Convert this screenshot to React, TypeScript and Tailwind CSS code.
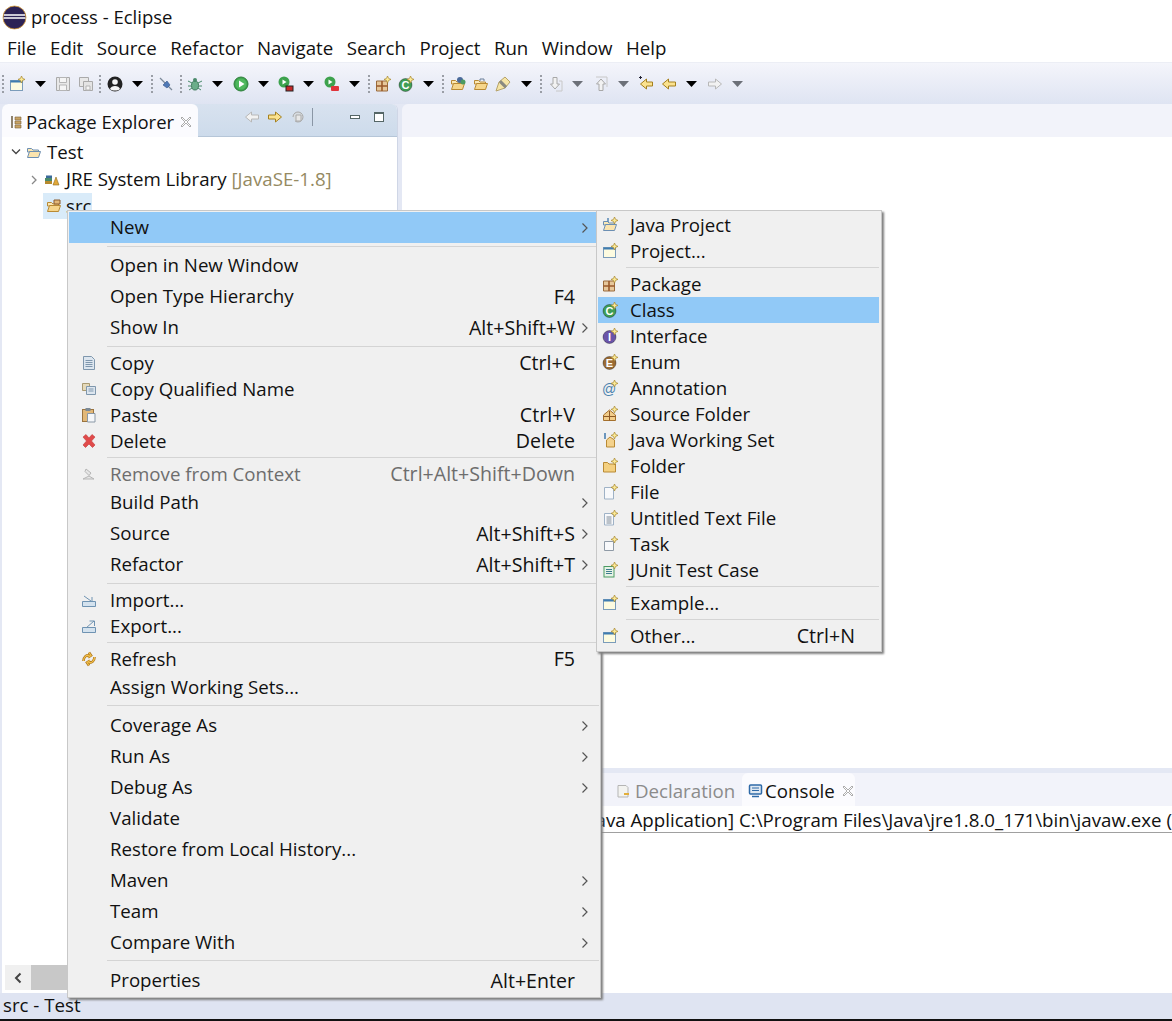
import React from "react";

const S = ({ x = 0, y = 0 }: { x?: number; y?: number }) => (
  <path transform={`translate(${x} ${y})`} d="M12.500 0l1.100 2.400 2.400 1-2.400 1-1.100 2.600-1-2.600-2.500-1 2.500-1z" fill="#fdeb95" stroke="#a8862e" strokeWidth="0.700" />
);

const I = ({ children, size = 16 }: { children: React.ReactNode; size?: number }) => (
  <svg width={size} height={size} viewBox="0 0 16 16" className="shrink-0 block">{children}</svg>
);

const Folder = ({ fill = "#f6d68c", stroke = "#b98a34" }: { fill?: string; stroke?: string }) => (
  <>
    <path d="M1.500 4.500h4l1.500 1.500h5.500v2h-11z" fill="#fbe8b5" stroke={stroke} />
    <path d="M1.500 13.500l2-6h11l-2 6z" fill={fill} stroke={stroke} />
  </>
);

const Win = () => (
  <>
    <rect x="1.500" y="4.500" width="12" height="10" fill="#fdfbe0" stroke="#7b9cba" />
    <rect x="1.500" y="4.500" width="12" height="2" fill="#3f7cb0" />
    <S />
  </>
);

const Pkg = ({ star = true }: { star?: boolean }) => (
  <>
    <path d="M1.500 5h11v10h-11z" fill="#e6c79b" stroke="#9a6b3c" />
    <path d="M7 5v10M1.500 10h11" stroke="#9a5a2c" strokeWidth="1.600" />
    {star && <S />}
  </>
);

const Ball = ({ c, l, star = true }: { c: string; l: string; star?: boolean }) => (
  <>
    <circle cx="7.500" cy="9" r="6.500" fill={c} stroke="#00000055" />
    <text x="7.500" y="12.800" textAnchor="middle" fontSize="11" fontWeight="700" fill="#fff" fontFamily="Liberation Sans">{l}</text>
    {star && <S />}
  </>
);

const Doc = ({ lines = false, c = "#9fb2c6" }: { lines?: boolean; c?: string }) => (
  <>
    <path d="M2.500 3.500h7l2 2v9.500h-9z" fill="#f8f9fb" stroke={c} />
    {lines && <path d="M4.500 7h5M4.500 9h5M4.500 11h5M4.500 13h5" stroke="#7f8b98" />}
    <S />
  </>
);

const icons: Record<string, React.ReactNode> = {
  win: <I><Win /></I>,
  jproj: <I><Folder fill="#fbe4ae" stroke="#6c8fb3" /><path d="M6 1v4" stroke="#4a7fb0" strokeWidth="1.400" /><S /></I>,
  pkg: <I><Pkg /></I>,
  cls: <I><Ball c="#3f9d55" l="C" /></I>,
  ifc: <I><Ball c="#6a54a8" l="I" /></I>,
  enm: <I><Ball c="#9a6a32" l="E" /></I>,
  ann: <I><text x="7" y="13.500" textAnchor="middle" fontSize="14" fill="#4a82ae" fontFamily="Liberation Sans">@</text><S /></I>,
  srcf: <I><path d="M1.500 9l6-5 6 5v5.500h-12z" fill="#f2cd8a" stroke="#a5702c" /><path d="M7.500 5v9.500M1.500 10.500h12" stroke="#8e5a26" /><S /></I>,
  jws: <I><path d="M3 1v6" stroke="#4a7fb0" strokeWidth="1.600" /><path d="M4.500 15V8l3.500-3 4.500 3v7z" fill="#f4d28c" stroke="#b98a34" /><S /></I>,
  fld: <I><path d="M1.500 14V4.500h4l1.500 1.500h6.500V14z" fill="#f4d080" stroke="#b98a34" /><S /></I>,
  file: <I><Doc /></I>,
  txt: <I><Doc lines /></I>,
  task: <I><path d="M2.500 5.500h9v9h-9z" fill="#f8f9fb" stroke="#8f9aa6" /><S /></I>,
  junit: <I><rect x="2" y="4.500" width="10" height="10.500" fill="#e7f3e6" stroke="#4b9b63" /><path d="M4 7.500h6M4 9.500h6M4 11.500h6" stroke="#3e7d8f" /><S /></I>,
  copy: <I><path d="M2.500 1.500h8l3 3v10h-11z" fill="#dde6ef" stroke="#7f97ad" /><path d="M4.500 5.500h7M4.500 7.500h7M4.500 9.500h7M4.500 11.500h7" stroke="#7f97ad" /></I>,
  copyq: <I><path d="M1.500 2.500h7v7h-7z" fill="#e5d9b9" stroke="#a99a72" /><path d="M5.500 5.500h9v8h-9z" fill="#dde6ef" stroke="#7f97ad" /><path d="M7.500 8h5M7.500 10h5" stroke="#7f97ad" /></I>,
  paste: <I><rect x="1.500" y="2.500" width="11" height="12" fill="#e2b878" stroke="#9a7440" /><rect x="4.500" y="1" width="5" height="3" fill="#7c8a96" /><path d="M6.500 6.500h7.500v8.500H6.500z" fill="#f5f7fa" stroke="#8a98a6" /></I>,
  del: <I><path d="M2 4l3-2.500 3 3.500 3-3.500 3 2.500-3.500 4 3.500 4-2.500 2.500-3.500-3.500-3.500 3.500-2.500-2.500 3.500-4z" fill="#e04a4a" stroke="#c23a3a" strokeWidth="0.600" /></I>,
  rm: <I><path d="M2 13l6-3 5 3zM5 3l5 4-2 2.500-4-4z" fill="#e6e6e6" stroke="#b5b5b5" /></I>,
  imp: <I><path d="M1.500 9.500h13v5h-13z" fill="#d4e2ee" stroke="#6f93b2" /><path d="M3 4l7 5M11 5v4.500H6.500" fill="none" stroke="#6f93b2" /></I>,
  exp: <I><path d="M1.500 9.500h13v5h-13z" fill="#d4e2ee" stroke="#6f93b2" /><path d="M5 10l8-7M8.500 3H13.500V8" fill="none" stroke="#6f93b2" /></I>,
  ref: (
    <I>
      <path d="M2.500 10c0-4 3-6.500 6-5.500M8 1.500l2 3-3 2M13.500 6c0 4-3 6.500-6 5.500M8 14.500l-2-3 3-2" fill="none" stroke="#a8701a" strokeWidth="2.600" />
      <path d="M2.500 10c0-4 3-6.500 6-5.500M8 1.500l2 3-3 2M13.500 6c0 4-3 6.500-6 5.500M8 14.500l-2-3 3-2" fill="none" stroke="#f2c04a" strokeWidth="1.300" />
    </I>
  ),
};

type Row = { l?: string; k?: string; i?: string; a?: boolean; h?: string; hi?: boolean; off?: boolean; c?: string };

const dn = "pt-[2px]";
const main: Row[] = [
  { l: "New", a: true, h: "h-[31px]", hi: true },
  {},
  { l: "Open in New Window", h: "h-[31px]" },
  { l: "Open Type Hierarchy", k: "F4", h: "h-[31px]" },
  { l: "Show In", k: "Alt+Shift+W", a: true, h: "h-[31px]" },
  {},
  { l: "Copy", k: "Ctrl+C", i: "copy", h: "h-[26px]" },
  { l: "Copy Qualified Name", i: "copyq", h: "h-[26px]" },
  { l: "Paste", k: "Ctrl+V", i: "paste", h: "h-[26px]" },
  { l: "Delete", k: "Delete", i: "del", h: "h-[26px]" },
  {},
  { l: "Remove from Context", k: "Ctrl+Alt+Shift+Down", i: "rm", h: "h-[26px]", off: true },
  { l: "Build Path", a: true, h: "h-[31px]" },
  { l: "Source", k: "Alt+Shift+S", a: true, h: "h-[31px]" },
  { l: "Refactor", k: "Alt+Shift+T", a: true, h: "h-[31px]" },
  {},
  { l: "Import...", i: "imp", h: "h-[26px]" },
  { l: "Export...", i: "exp", h: "h-[26px]" },
  {},
  { l: "Refresh", k: "F5", i: "ref", h: "h-[26px]" },
  { l: "Assign Working Sets...", h: "h-[30px]" },
  {},
  { l: "Coverage As", a: true, h: "h-[31px]", c: dn },
  { l: "Run As", a: true, h: "h-[31px]", c: dn },
  { l: "Debug As", a: true, h: "h-[31px]", c: dn },
  { l: "Validate", h: "h-[31px]", c: dn },
  { l: "Restore from Local History...", h: "h-[31px]", c: dn },
  { l: "Maven", a: true, h: "h-[31px]", c: dn },
  { l: "Team", a: true, h: "h-[31px]", c: dn },
  { l: "Compare With", a: true, h: "h-[31px]", c: dn },
  {},
  { l: "Properties", k: "Alt+Enter", h: "h-[31px]", c: dn },
];

const sub: Row[] = [
  { l: "Java Project", i: "jproj" },
  { l: "Project...", i: "win" },
  {},
  { l: "Package", i: "pkg" },
  { l: "Class", i: "cls", hi: true },
  { l: "Interface", i: "ifc" },
  { l: "Enum", i: "enm" },
  { l: "Annotation", i: "ann" },
  { l: "Source Folder", i: "srcf" },
  { l: "Java Working Set", i: "jws" },
  { l: "Folder", i: "fld" },
  { l: "File", i: "file" },
  { l: "Untitled Text File", i: "txt" },
  { l: "Task", i: "task" },
  { l: "JUnit Test Case", i: "junit" },
  {},
  { l: "Example...", i: "win" },
  {},
  { l: "Other...", k: "Ctrl+N", i: "win" },
];

const Chevron = () => (
  <svg width="8" height="12" viewBox="0 0 8 12" className="block">
    <path d="M1.500 1.500L6 6l-4.500 4.500" fill="none" stroke="#555" strokeWidth="1.200" />
  </svg>
);

const Main = () => (
  <div className="absolute left-[67px] top-[210px] z-10 w-[534px] h-[788px] bg-[#f0f0f0] border border-[#c8c8c8] p-px shadow-[2px_2px_2px_#808080]">
    {main.map((r, n) =>
      r.l ? (
        <div key={n} className={`flex items-center ${r.h} ${r.c ?? ""} ${r.hi ? "bg-[#91c9f7]" : ""} ${r.off ? "text-[#6d6d6d]" : "text-[#111]"}`}>
          <div className="w-[41px] pl-[12px] shrink-0">{r.i && icons[r.i]}</div>
          <div className="flex-1">{r.l}</div>
          <div className="text-[19.600px]">{r.k}</div>
          <div className="w-[24px] pl-[6px] shrink-0">{r.a && <Chevron />}</div>
        </div>
      ) : (
        <div key={n} className="h-[7px] flex items-center pl-[38px]">
          <div className="h-px w-full bg-[#d4d4d4]" />
        </div>
      )
    )}
  </div>
);

const Sub = () => (
  <div className="absolute left-[596px] top-[210px] z-20 w-[286px] h-[442px] bg-[#f0f0f0] border border-[#c8c8c8] p-px shadow-[2px_2px_2px_#808080]">
    {sub.map((r, n) =>
      r.l ? (
        <div key={n} className={`flex items-center h-[26px] mr-[1px] text-[#111] ${r.hi ? "bg-[#91c9f7]" : ""}`}>
          <div className="w-[32px] pl-[4px] shrink-0">{r.i && icons[r.i]}</div>
          <div className="flex-1">{r.l}</div>
          <div className="text-[19.600px]">{r.k}</div>
          <div className="w-[24px] shrink-0" />
        </div>
      ) : (
        <div key={n} className="h-[7px] flex items-center pl-[28px] pr-px">
          <div className="h-px w-full bg-[#d4d4d4]" />
        </div>
      )
    )}
  </div>
);

const Caret = ({ off }: { off?: boolean }) => (
  <div className="w-[22.800px] shrink-0 flex justify-center">
    <svg width="11" height="6" viewBox="0 0 11 6" className="block">
      <path d="M0 0h11L5.500 6z" fill={off ? "#6c7078" : "#000"} />
    </svg>
  </div>
);
const Grip = () => (
  <div className="w-[6px] shrink-0 h-[18px] flex justify-center">
    <div className="h-full border-l-2 border-dotted border-[#9a9ea6]" />
  </div>
);
const T = ({ children }: { children: React.ReactNode }) => (
  <div className="w-[22.800px] shrink-0 flex justify-center">{children}</div>
);

const Arrow = ({ dir, fill, stroke }: { dir: "l" | "r"; fill: string; stroke: string }) => (
  <I>
    <path d={dir === "l" ? "M1.500 8l6-5v3h7v4h-7v3z" : "M14.500 8l-6-5v3h-7v4h7v3z"} fill={fill} stroke={stroke} />
  </I>
);

const Arrow2 = () => (
  <>
    <path d="M2.500 8l6-5v3h6v4h-6v3z" fill="#fbe28e" stroke="#a5801e" />
    <path d="M1 1.500h3M2.500 0v3" stroke="#223" strokeWidth="1" />
  </>
);

const Toolbar = () => (
  <div className="h-[42px] flex items-center bg-gradient-to-b from-[#f4f5fb] to-[#dfe4f2] border-t border-[#eceef5] shrink-0">
    <Grip />
    <T><I><Win /></I></T>
    <Caret />
    <T><I><path d="M1.500 1.500h13v13h-13z" fill="#e8e8e8" stroke="#aaa" /><path d="M4.500 1.500h7v5h-7zM4.500 9h7v5.500h-7z" fill="#f5f5f5" stroke="#b5b5b5" /></I></T>
    <T><I><path d="M1.500 1.500h9v9h-9z" fill="#e8e8e8" stroke="#aaa" /><path d="M5.500 5.500h9v9h-9z" fill="#e4e4e4" stroke="#aaa" /><path d="M8 10h4v4H8z" fill="#f5f5f5" stroke="#b5b5b5" /></I></T>
    <Grip />
    <T><I><circle cx="8" cy="8" r="7.500" fill="#222" /><circle cx="8" cy="6" r="2.800" fill="#f5f5f5" /><path d="M3 13c1-4 9-4 10 0-2 2-8 2-10 0z" fill="#f5f5f5" /></I></T>
    <Caret />
    <Grip />
    <T><I><path d="M2 2l12 12" stroke="#7c8a9a" strokeWidth="1.200" /><path d="M5 9l4-4 3 4-3 3z" fill="#4f78b5" stroke="#35558c" strokeWidth="0.600" /></I></T>
    <Grip />
    <T><I><ellipse cx="8" cy="9.500" rx="3.500" ry="4.500" fill="#6cae8a" stroke="#3f7a5c" /><circle cx="8" cy="4" r="2" fill="#4a8a6a" /><path d="M1 5l4 2M1 10h3M2 14l3-2M15 5l-4 2M15 10h-3M14 14l-3-2" stroke="#4a8a6a" /></I></T>
    <Caret />
    <T><I><circle cx="8" cy="8" r="7" fill="#3da24d" stroke="#2d7f3a" /><circle cx="8" cy="8" r="5.500" fill="#4fb85e" /><path d="M6 4.500l5.500 3.500L6 11.500z" fill="#fff" /></I></T>
    <Caret />
    <T><I><circle cx="6" cy="6" r="5.500" fill="#3da24d" /><path d="M4.500 3.500l4 2.500-4 2.500z" fill="#fff" /><rect x="8" y="10" width="7" height="5" fill="#c62828" stroke="#222" /></I></T>
    <Caret />
    <T><I><circle cx="6" cy="6" r="5.500" fill="#3da24d" /><path d="M4.500 3.500l4 2.500-4 2.500z" fill="#fff" /><rect x="7" y="10" width="8" height="5" rx="1" fill="#e0333a" /></I></T>
    <Caret />
    <Grip />
    <T><I><Pkg /></I></T>
    <T><I><Ball c="#3f9d55" l="C" /></I></T>
    <Caret />
    <Grip />
    <T><I><Folder /><circle cx="10" cy="4" r="3" fill="#4a6a9a" /><circle cx="13" cy="6" r="2.500" fill="#4c9a60" /></I></T>
    <T><I><Folder /><path d="M7 5V3h4v2" fill="none" stroke="#6b7f99" /></I></T>
    <T><I><path d="M1 15l3-9 6-5 5 5-5 6z" fill="#f6e5a6" stroke="#b6a36a" /><path d="M6 4l6 6-2 2.500-6-6z" fill="#8a8a80" /></I></T>
    <Caret />
    <Grip />
    <T><I><path d="M6 1.500h4V8h2.500L8 13 3.500 8H6z" fill="#f2f2f2" stroke="#a8a8a8" /><path d="M12 5h3v10H9" fill="none" stroke="#c8c8c8" /></I></T>
    <Caret off />
    <T><I><path d="M6 14.500h4V8h2.500L8 3 3.500 8H6z" fill="#f2f2f2" stroke="#a8a8a8" /><path d="M3 1h11v10" fill="none" stroke="#c8c8c8" /></I></T>
    <Caret off />
    <T><I><Arrow2 /></I></T>
    <T><Arrow dir="l" fill="#fbe28e" stroke="#a5801e" /></T>
    <Caret />
    <T><Arrow dir="r" fill="#f2f2f2" stroke="#b8b8b8" /></T>
    <Caret off />
  </div>
);

const Left = () => (
  <div className="w-[396px] ml-[2px] shrink-0 flex flex-col rounded-t-md overflow-hidden bg-white border-r border-[#cfd6e6]">
    <div className="h-[33px] shrink-0 flex bg-gradient-to-b from-[#d8e2ef] to-[#cddbeb] border-b border-[#b6c6d8]">
      <div className="w-[196px] h-[33px] shrink-0 flex items-center bg-[#fbfbfe] rounded-t-md pl-[7px] pt-[3px]">
        <I><path d="M3 2v12" stroke="#6a5a3e" strokeWidth="1.500" /><path d="M6 3h6v3H6zM6 7h6v3H6zM6 11h6v3H6z" fill="#c9a465" stroke="#7a5f36" strokeWidth="0.600" /></I>
        <span className="ml-[1px] text-[18.500px] text-[#111]">Package Explorer</span>
        <svg width="12" height="12" viewBox="0 0 12 12" className="block ml-[6px]"><path d="M2 1l4 4 4-4 1 1-4 4 4 4-1 1-4-4-4 4-1-1 4-4-4-4z" fill="#fff" stroke="#8a8a8a" strokeWidth="0.700" /></svg>
      </div>
      <div className="flex items-center h-[26px] pl-[46px] gap-[7px]">
        <Arrow dir="l" fill="#f2f2f2" stroke="#b8b8b8" />
        <Arrow dir="r" fill="#fbe28e" stroke="#a5801e" />
        <I><path d="M3 8a5 5 0 1 1 2 4" fill="#d8dde2" stroke="#a8a8a8" /><path d="M6 6h5v6H6z" fill="#e8e8e8" stroke="#aaa" /></I>
        <div className="w-px h-[18px] bg-[#8a96a5] -ml-[1px]" />
        <div className="w-[23px]" />
        <div className="w-[10px] h-[4px] border border-[#566] bg-white" />
        <div className="w-[10px] h-[10px] border border-[#566] border-t-2 bg-white ml-[7px]" />
      </div>
    </div>
    <div className="flex-1 relative flex flex-col">
      <div className="flex items-center h-[28px] pl-[9px] mt-[1px]">
        <svg width="10" height="8" viewBox="0 0 10 8" className="block"><path d="M1 1.500l4 4 4-4" fill="none" stroke="#444" strokeWidth="1.300" /></svg>
        <div className="ml-[5px]"><I><Folder fill="#fbe4ae" stroke="#6c8fb3" /></I></div>
        <span className="ml-[5px] text-[#111]">Test</span>
      </div>
      <div className="flex items-center h-[27px] pl-[28px]">
        <svg width="8" height="10" viewBox="0 0 8 10" className="block"><path d="M2 1l4 4-4 4" fill="none" stroke="#888" strokeWidth="1.300" /></svg>
        <div className="ml-[6px]"><I><path d="M1 6h7v3H1z" fill="#4a8a6a" /><path d="M1 9h7v3H1z" fill="#b58a2e" /><path d="M2 3.500h6V6H2z" fill="#3a6a9a" /><path d="M9 13l3-8 3 8z" fill="#e2a93a" stroke="#8a6a1e" strokeWidth="0.600" /></I></div>
        <span className="ml-[6px] text-[#111]">JRE System Library <span className="text-[#958a62]">[JavaSE-1.8]</span></span>
      </div>
      <div className="flex items-center h-[26px] ml-[41px] w-[49px] bg-[#d9ebf9] pl-[3px]">
        <I><Folder /><path d="M8 2h6v4H8z" fill="#e2b878" stroke="#8a5a2c" /></I>
        <span className="ml-[4px] text-[#111]">src</span>
      </div>
      <div className="flex-1" />
      <div className="h-[25px] flex bg-[#f0f0f0] mb-[3px] ml-[3px]">
        <div className="w-[26px] flex items-center justify-center">
          <svg width="8" height="12" viewBox="0 0 8 12" className="block"><path d="M6.500 1.500L2 6l4.500 4.500" fill="none" stroke="#444" strokeWidth="2" /></svg>
        </div>
        <div className="w-[100px] bg-[#c8c8c8]" />
      </div>
    </div>
  </div>
);

const Right = () => (
  <div className="flex-1 ml-[4px] flex flex-col min-w-0">
    <div className="h-[33px] shrink-0 bg-[#f2f3fa] rounded-tl-md" />
    <div className="h-[631px] shrink-0 bg-white" />
    <div className="h-[5px] shrink-0 bg-[#e4e8f4]" />
    <div className="h-[33px] shrink-0 bg-[#f2f3fa] flex items-end overflow-hidden pl-[24px] text-[#8b8b8b]">
      <div className="flex items-center h-[33px] w-[84px] pt-[3px] whitespace-nowrap">Problems</div>
      <div className="flex items-center h-[33px] w-[105px] pt-[3px] whitespace-nowrap">@ Javadoc</div>
      <div className="flex items-center h-[33px] w-[131px] pt-[3px]">
        <I><path d="M3 2.500h8l2 2V14H3z" fill="#f3f3f0" stroke="#b5b5b5" /><path d="M9 11h5" stroke="#e3ae3a" strokeWidth="2" /></I>
        <span className="ml-[4px]">Declaration</span>
      </div>
      <div className="flex items-center h-[33px] w-[113px] bg-[#fbfbfe] rounded-t-md pl-[6px] pt-[3px] text-[#111] -ml-[4px]">
        <I><rect x="1.500" y="2" width="12" height="9" rx="1" fill="#dfe8f2" stroke="#2f6aa8" strokeWidth="1.500" /><path d="M4 5h7M4 7.500h7" stroke="#2f6aa8" /><path d="M4 13.500h7" stroke="#2f6aa8" strokeWidth="1.500" /></I>
        <span className="ml-[1px]">Console</span>
        <svg width="12" height="12" viewBox="0 0 12 12" className="block ml-[7px]"><path d="M2 1l4 4 4-4 1 1-4 4 4 4-1 1-4-4-4 4-1-1 4-4-4-4z" fill="#fff" stroke="#8a8a8a" strokeWidth="0.700" /></svg>
      </div>
    </div>
    <div className="h-[27px] shrink-0 bg-white border-b border-[#a0a0a0] flex items-center overflow-hidden whitespace-nowrap pl-[110px] pt-[3px] text-[#111]">
      process [Java Application] C:\Program Files\Java\jre1.8.0_171\bin\javaw.exe (2
    </div>
    <div className="flex-1 bg-white" />
  </div>
);

export default function App() {
  return (
    <div className="relative w-[1172px] h-[1021px] overflow-hidden flex flex-col bg-[#e4e8f4] text-[18.700px] leading-none font-['Open_Sans','Noto_Sans',sans-serif]">
      <div className="h-[34px] shrink-0 bg-white flex items-center pl-[2px]">
        <svg width="25" height="25" viewBox="0 0 25 25" className="block">
          <circle cx="12.500" cy="12.500" r="11.500" fill="#2c2255" stroke="#e0a33a" strokeWidth="0.800" />
          <path d="M2 10h21M1.500 13h22" stroke="#fff" strokeWidth="1.500" />
        </svg>
        <span className="ml-[4px] text-[18.500px] text-[#111]">process - Eclipse</span>
      </div>
      <div className="h-[28px] shrink-0 bg-white flex items-center pl-[7px] gap-[13.500px] text-[#111]">
        {["File", "Edit", "Source", "Refactor", "Navigate", "Search", "Project", "Run", "Window", "Help"].map((m) => (
          <span key={m}>{m}</span>
        ))}
      </div>
      <Toolbar />
      <div className="flex-1 flex min-h-0">
        <Left />
        <Right />
      </div>
      <div className="h-[28px] shrink-0 bg-[#dfe4f2] border-b-2 border-[#111] flex items-center pl-[3px] pb-[2px] text-[#111]">src - Test</div>
      <Main />
      <Sub />
    </div>
  );
}
